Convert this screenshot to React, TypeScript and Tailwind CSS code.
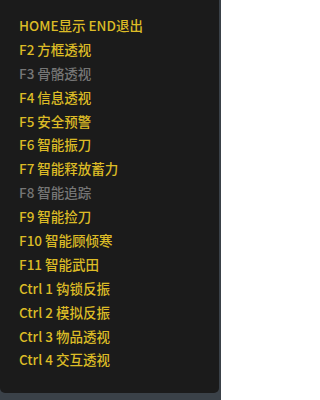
const items: { text: string; off?: boolean }[] = [
  { text: 'HOME显示 END退出' },
  { text: 'F2 方框透视' },
  { text: 'F3 骨骼透视', off: true },
  { text: 'F4 信息透视' },
  { text: 'F5 安全预警' },
  { text: 'F6 智能振刀' },
  { text: 'F7 智能释放蓄力' },
  { text: 'F8 智能追踪', off: true },
  { text: 'F9 智能捡刀' },
  { text: 'F10 智能顾倾寒' },
  { text: 'F11 智能武田' },
  { text: 'Ctrl 1 钩锁反振' },
  { text: 'Ctrl 2 模拟反振' },
  { text: 'Ctrl 3 物品透视' },
  { text: 'Ctrl 4 交互透视' },
];

export default function App() {
  return (
    <div className="w-[221px] h-[400px] bg-[#3a4148] flex flex-col">
      <div className="w-[219px] h-[393px] bg-[#1b1b1b] rounded-b-[5px] pt-[13px] pl-[19px] font-['Noto_Sans_CJK_SC',sans-serif]">
        {items.map((it) => (
          <div
            key={it.text}
            className={`h-[23.9px] leading-[24px] text-[13.5px] font-medium whitespace-nowrap ${it.off ? 'text-[#767676]' : 'text-[#dcbb26]'}`}
          >
            {it.text}
          </div>
        ))}
      </div>
    </div>
  );
}
